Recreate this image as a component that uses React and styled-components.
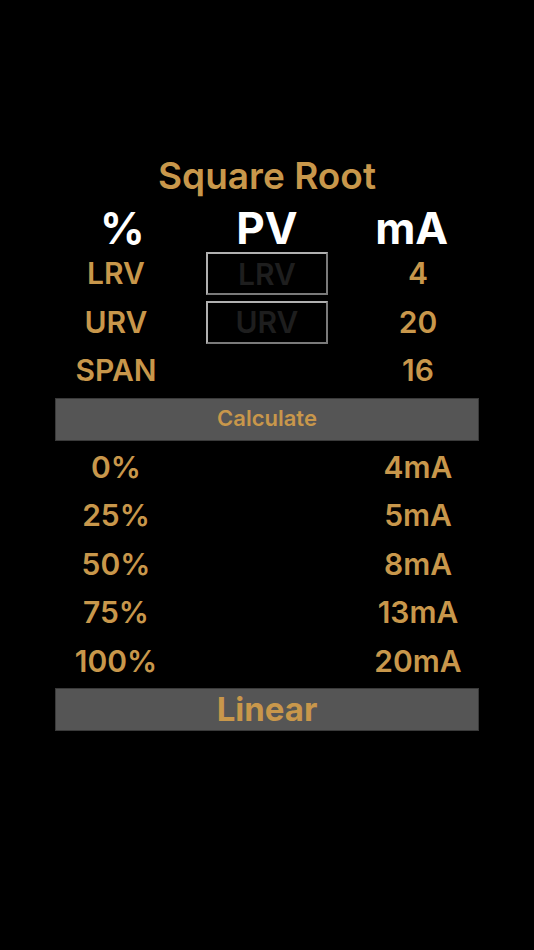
import React from "react";
import styled, { createGlobalStyle } from "styled-components";

const Global = createGlobalStyle`
  html, body { margin: 0; padding: 0; background: #000; }
  body { font-family: Inter, "Noto Sans", "Liberation Sans", sans-serif; }
`;

const GOLD = "#c8974b";
const ROW = "48.4px";

const Page = styled.div`
  min-height: 950px;
  background: #000;
  display: flex;
  justify-content: center;
  padding-top: 153px;
  box-sizing: border-box;
`;

const Column = styled.div`
  width: 424px;
  display: flex;
  flex-direction: column;
`;

const Title = styled.div`
  height: ${ROW};
  display: flex;
  align-items: center;
  justify-content: center;
  padding-bottom: 3px;
  box-sizing: border-box;
  color: ${GOLD};
  font-size: 37px;
  font-weight: 600;
`;

const HeaderRow = styled.div`
  height: ${ROW};
  margin: 0 -5px;
  padding-bottom: 6px;
  box-sizing: border-box;
  display: grid;
  grid-template-columns: 1fr 1fr 1fr;
  align-items: center;
  justify-items: center;
  color: #fff;
  font-size: 44px;
  font-weight: 700;
`;

const Row = styled.div`
  height: ${ROW};
  display: grid;
  grid-template-columns: 122px 1fr 122px;
  column-gap: 29px;
  align-items: center;
  justify-items: center;
  padding-bottom: 1px;
  box-sizing: border-box;
  color: ${GOLD};
  font-size: ${(p) => p.$size || 30}px;
  font-weight: 600;
`;

const Field = styled.input`
  width: 122px;
  height: 43px;
  margin-top: 1px;
  box-sizing: border-box;
  border: 2px solid;
  border-color: #b0b0b0 #7a7a7a #7a7a7a #b0b0b0;
  background: #000;
  color: #fff;
  text-align: center;
  font-family: inherit;
  font-size: 30px;
  font-weight: 600;
  padding: 0;
  outline: none;
  &::placeholder { color: #1e1e1e; }
`;

const ButtonRow = styled.div`
  height: ${ROW};
  display: flex;
  align-items: center;
`;

const Button = styled.button`
  width: 100%;
  height: 43px;
  background: #555;
  border: 1px solid #3a3a3a;
  color: ${GOLD};
  font-family: inherit;
  font-size: ${(p) => p.$size}px;
  font-weight: ${(p) => p.$weight};
  padding: 0 0 2px;
  cursor: pointer;
`;

const results = [
  ["0%", "4mA"],
  ["25%", "5mA"],
  ["50%", "8mA"],
  ["75%", "13mA"],
  ["100%", "20mA"],
];

export default function App() {
  return (
    <>
      <Global />
      <Page>
        <Column>
          <Title>Square Root</Title>
          <HeaderRow>
            <span>%</span>
            <span>PV</span>
            <span>mA</span>
          </HeaderRow>
          <Row>
            <span>LRV</span>
            <Field placeholder="LRV" />
            <span>4</span>
          </Row>
          <Row>
            <span>URV</span>
            <Field placeholder="URV" />
            <span>20</span>
          </Row>
          <Row>
            <span>SPAN</span>
            <span />
            <span>16</span>
          </Row>
          <ButtonRow>
            <Button $size={22} $weight={600}>Calculate</Button>
          </ButtonRow>
          {results.map(([p, m]) => (
            <Row key={p} $size={30}>
              <span>{p}</span>
              <span />
              <span>{m}</span>
            </Row>
          ))}
          <ButtonRow>
            <Button $size={33} $weight={700}>Linear</Button>
          </ButtonRow>
        </Column>
      </Page>
    </>
  );
}
